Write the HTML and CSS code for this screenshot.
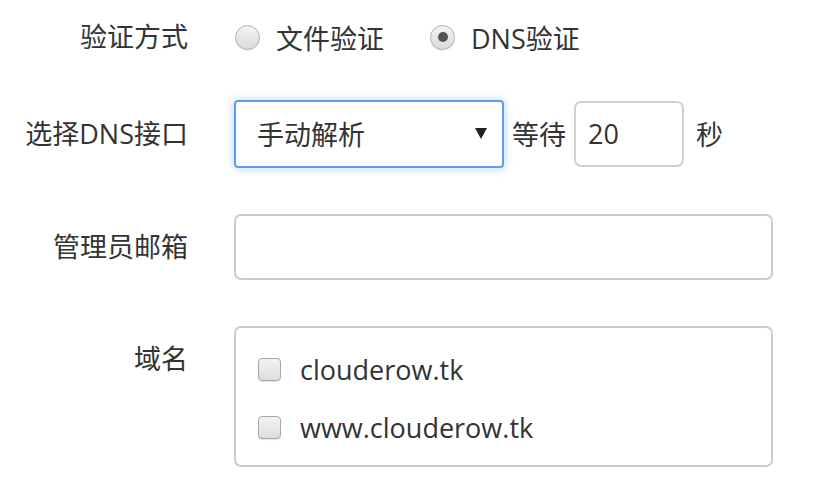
FILE: index.html
```html
<!DOCTYPE html>
<html lang="zh">
<head>
<meta charset="utf-8">
<title>DNS验证</title>
<link rel="stylesheet" href="styles.css">
</head>
<body>
<form class="form">
  <div class="row row-1">
    <label class="label">验证方式</label>
    <div class="control radios">
      <span class="radio-opt"><span class="radio"></span><span>文件验证</span></span>
      <span class="radio-opt"><span class="radio checked"></span><span>DNS验证</span></span>
    </div>
  </div>
  <div class="row row-2">
    <label class="label">选择DNS接口</label>
    <div class="control inline">
      <div class="select"><span>手动解析</span><svg class="caret" width="12" height="11" viewBox="0 0 12 11"><path d="M0 0H12L6 11Z" fill="#222"/></svg></div>
      <span class="wait">等待</span>
      <div class="num">20</div>
      <span class="sec">秒</span>
    </div>
  </div>
  <div class="row row-3">
    <label class="label">管理员邮箱</label>
    <div class="control">
      <div class="text-input"></div>
    </div>
  </div>
  <div class="row row-4">
    <label class="label">域名</label>
    <div class="control">
      <div class="domains">
        <div class="check-opt"><span class="checkbox"></span><span>clouderow.tk</span></div>
        <div class="check-opt"><span class="checkbox"></span><span>www.clouderow.tk</span></div>
      </div>
    </div>
  </div>
</form>
</body>
</html>
```

FILE: styles.css
```css
html, body {
  margin: 0;
  padding: 0;
  background: #fff;
}
body {
  font-family: "Open Sans", "Noto Sans CJK SC", sans-serif;
  font-size: 27px;
  color: #333;
}
.form {
  padding-top: 4px;
  width: 825px;
}
.row {
  display: flex;
  align-items: center;
  gap: 46px;
}
.row-1 { height: 66px; }
.row-2 { margin-top: 30px; height: 67px; }
.row-3 { margin-top: 47px; height: 66px; }
.row-4 { margin-top: 46px; align-items: flex-start; }
.label {
  width: 188px;
  flex: none;
  text-align: right;
  line-height: 66px;
}
.control {
  flex: none;
  width: 539px;
}
.radios {
  display: flex;
  align-items: center;
  gap: 46px;
  margin-left: 1px;
}
.radio-opt {
  display: flex;
  align-items: center;
  gap: 16px;
}
.radio {
  box-sizing: border-box;
  width: 25px;
  height: 25px;
  border-radius: 50%;
  border: 1px solid #b0b0b0;
  background: linear-gradient(#f4f4f4, #dadada);
  box-shadow: 0 1px 1px rgba(0,0,0,0.08);
  position: relative;
}
.radio.checked::after {
  content: "";
  position: absolute;
  left: 6.5px;
  top: 6.5px;
  width: 10px;
  height: 10px;
  border-radius: 50%;
  background: #555;
}
.inline {
  display: flex;
  align-items: center;
}
.select {
  box-sizing: border-box;
  width: 270px;
  height: 68px;
  border: 2px solid #5b9df5;
  border-radius: 4px;
  box-shadow: 0 0 10px rgba(102,160,240,0.45);
  display: flex;
  align-items: center;
  justify-content: space-between;
  padding: 0 15px 0 21px;
}
.caret { display: block; }
.wait { margin-left: 8px; }
.num {
  box-sizing: border-box;
  margin-left: 8px;
  width: 110px;
  height: 66px;
  border: 2px solid #d0d0d0;
  border-radius: 7px;
  padding-left: 12px;
  display: flex;
  align-items: center;
}
.sec { margin-left: 12px; }
.text-input {
  box-sizing: border-box;
  width: 539px;
  height: 66px;
  border: 2px solid #ccc;
  border-radius: 7px;
}
.domains {
  box-sizing: border-box;
  width: 539px;
  border: 2px solid #ccc;
  border-radius: 7px;
  padding: 23px 22px 20px 22px;
  display: flex;
  flex-direction: column;
  gap: 22px;
}
.check-opt {
  display: flex;
  align-items: center;
  gap: 19px;
  height: 36px;
}
.checkbox {
  box-sizing: border-box;
  width: 23px;
  height: 23px;
  border: 1px solid #a8a8a8;
  border-radius: 4px;
  background: linear-gradient(#f2f2f2, #dedede);
  box-shadow: 0 1px 1px rgba(0,0,0,0.1);
}
```
